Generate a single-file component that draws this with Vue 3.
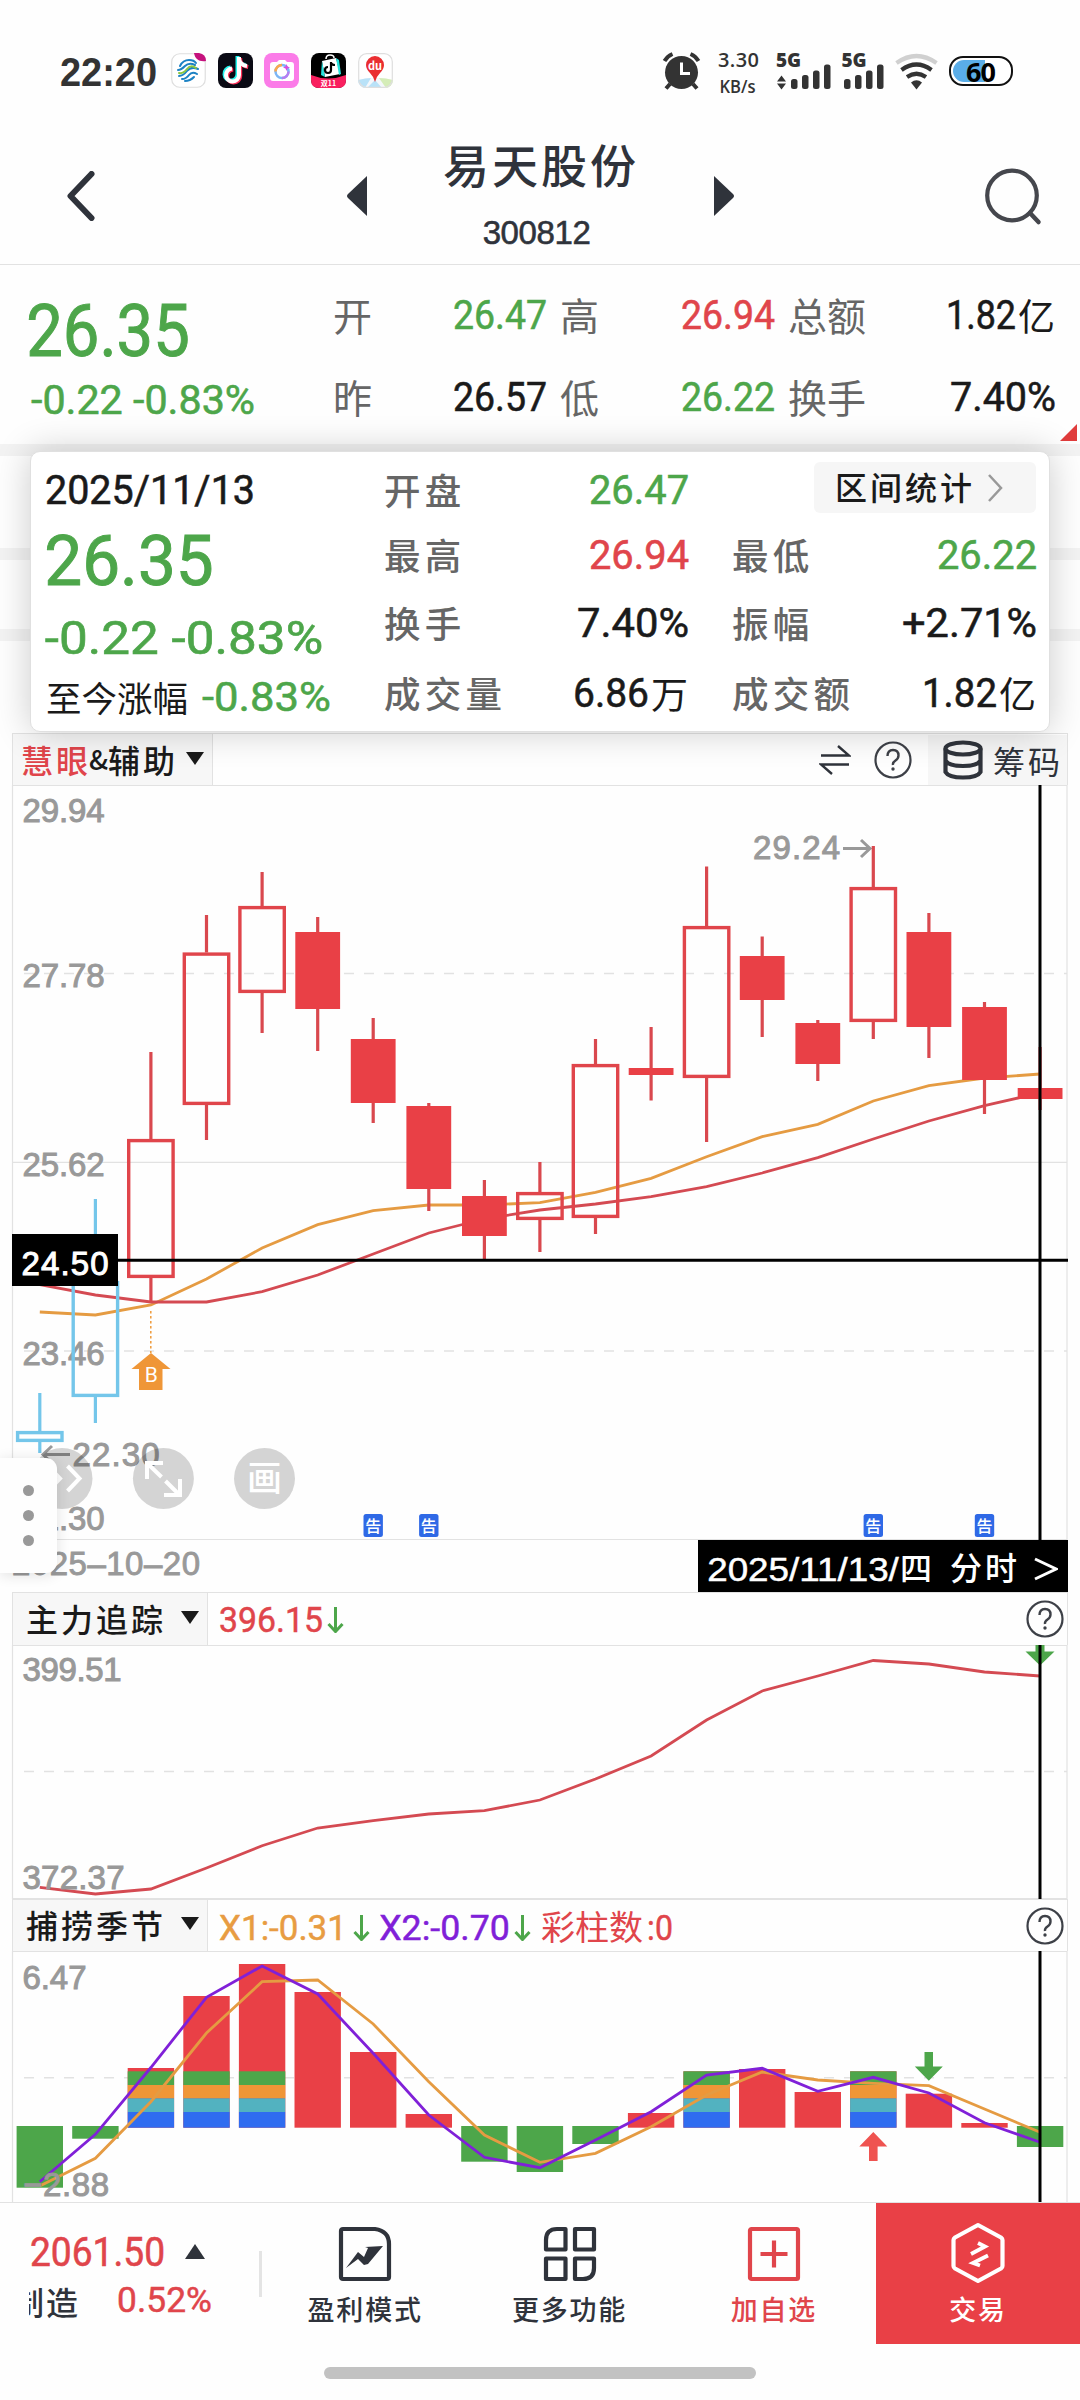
<template>
  <div class="page">
    <header class="status">
      <FitNum class="clock" t="22:20" :w="95" :s="40" bold />
      <svg class="apps" viewBox="0 0 222 36" width="222" height="36">
        <rect x=".75" y=".75" width="33.5" height="33.5" rx="8" fill="#fff" stroke="#dedede" stroke-width="1.2" />
        <path d="M23 0h5q7 1 7 8c-7 1-11-2-12-8z" fill="#c5127d" />
        <g fill="none" stroke-width="2" stroke-linecap="round">
          <path d="M9 13q3-6 9-6 5 0 7 3M7 17q3 0 7-4t10-1" stroke="#1c82c4" />
          <path d="M8 23q4 0 8-5t11-2M11 26q4 0 7-4t8-1M14 28q5 0 9-4" stroke="#1c82c4" />
          <path d="M8 20q4 1 8-4t9-1" stroke="#8cc63f" />
        </g>
        <rect x="47" width="35" height="35" rx="8" fill="#0a0a14" />
        <g fill="none" stroke-width="4">
          <path d="M68 4v18a6.500 6.500 0 1 1-7-6.500M68 6q1 6 8 7" stroke="#25f4ee" transform="translate(-1.500 -1)" />
          <path d="M68 4v18a6.500 6.500 0 1 1-7-6.500M68 6q1 6 8 7" stroke="#fe2c55" transform="translate(1.200 1)" />
          <path d="M68 4v18a6.500 6.500 0 1 1-7-6.500M68 6q1 6 8 7" stroke="#fff" />
        </g>
        <rect x="93" width="35" height="35" rx="8" fill="#fb7be8" />
        <path d="M102 9h4l2-2h6l2 2h4q3 0 3 3v13q0 3-3 3h-18q-3 0-3-3V12q0-3 3-3z" fill="#fff" />
        <circle cx="111" cy="18.500" r="6.500" fill="none" stroke="#7cb6f6" stroke-width="2.500" />
        <path d="M104.500 18.500a6.500 6.500 0 0 1 6.500-6.500" fill="none" stroke="#fba94c" stroke-width="2.500" />
        <path d="M111 25a6.500 6.500 0 0 0 6.500-6.500" fill="none" stroke="#b67df2" stroke-width="2.500" />
        <path d="M115.500 11l1 2.500 2.500 1-2.500 1-1 2.500-1-2.500-2.500-1 2.500-1z" fill="#d94be0" />
        <rect x="140" width="35" height="35" rx="8" fill="#000" />
        <path d="M140 22q17 7 35 0v5q0 8-8 8h-19q-8 0-8-8z" fill="#f9205f" />
        <path d="M151 8l14-3 4 16-15 3z" fill="#fff" />
        <path d="M151 8l3 16-4-2zM165 5l3 2 2 14-2 1z" fill="#25e4de" />
        <path d="M155 6q0-4 4-4t4 3" fill="none" stroke="#fff" stroke-width="1.500" />
        <path d="M160 9v8a3 3 0 1 1-3-3M160 10q1 2 4 2" fill="none" stroke="#000" stroke-width="2.200" />
        <text x="157.500" y="33" class="tiny">双11</text>
        <clipPath id="mapClip"><rect x="187" y="0" width="35" height="35" rx="8" /></clipPath>
        <g clip-path="url(#mapClip)">
          <rect x="187" width="35" height="35" fill="#fff" />
          <path d="M187 27q16-5 35 0v9h-35z" fill="#f4f7fb" />
          <path d="M187 27q8-2 13-2l-6 10h-7zM204 27l7 8h-15z" fill="#b9e2f8" />
          <path d="M208 25q7 0 14 2v8h-7z" fill="#d5edb8" />
        </g>
        <rect x="187.700" y=".7" width="33.600" height="33.600" rx="8" fill="none" stroke="#dedede" stroke-width="1.200" />
        <path d="M204 29q-1-5-5-9-4-4-4-8a9 9 0 0 1 18 0q0 4-4 8-4 4-5 9z" fill="#ea2e31" />
        <text x="204" y="17" class="tiny du">du</text>
      </svg>
      <svg class="sys" viewBox="660 48 356 48" width="356" height="48">
        <g fill="#333">
          <circle cx="681.500" cy="72.500" r="16.500" />
          <g fill="none" stroke="#333" stroke-width="4">
            <path d="M664.500 61q3-5 8-7M698.500 61q-3-5-8-7M670 84l-4 4.500M693 84l4 4.500" />
            <path d="M681.500 62.500v11h8.500" stroke="#fff" stroke-width="3" />
          </g>
          <text x="718" y="66.500" textLength="41" font-size="20" font-weight="600">3.30</text>
          <text x="719.500" y="92.500" textLength="36" lengthAdjust="spacingAndGlyphs" font-size="18" font-weight="600">KB/s</text>
          <g v-for="g in signals" :key="g.x">
            <text :x="g.tx" y="67" textLength="25" font-size="19" font-weight="800">5G</text>
            <rect v-for="(h, i) in [10, 14, 18.500, 24.500]" :key="i" :x="g.x + i * 11" :y="89 - h" width="6.500" :height="h" rx="2.500" />
          </g>
          <path d="M777 81.500l4.500-6 4.500 6zM777 83.500l4.500 6 4.500-6z" />
          <path d="M911 82.500q5.500-4.500 11 0l-5.500 7z" />
        </g>
        <g fill="none" stroke-width="4.200">
          <path d="M896.500 63q20-14 40 0" stroke="#d0d0d0" />
          <path d="M901.500 70q15-11 30 0M907 77q9.500-6.500 19 0" stroke="#333" />
        </g>
        <rect x="950" y="57" width="62" height="28" rx="13" fill="#fff" stroke="#111" stroke-width="2" />
        <path d="M985 60v22h-21a11 11 0 0 1 0-22z" fill="#5aade8" />
        <text x="966" y="81.500" textLength="30" font-size="27" font-weight="700" fill="#000">60</text>
      </svg>
    </header>

    <nav class="nav">
      <svg class="back" viewBox="0 0 28 50" width="28" height="50">
        <path d="M24.500 3L3.500 25l21 22" fill="none" stroke="#2f333b" stroke-width="6" stroke-linecap="round" stroke-linejoin="round" />
      </svg>
      <svg class="prev" viewBox="0 0 20 40" width="20" height="40"><path d="M20 0v40L1 22q-2-2 0-4z" fill="#2f333b" /></svg>
      <div class="name">
        <h1>易天股份</h1>
        <p>300812</p>
      </div>
      <svg class="next" viewBox="0 0 20 40" width="20" height="40"><path d="M0 0v40l19-18q2-2 0-4z" fill="#2f333b" /></svg>
      <svg class="search" viewBox="0 0 58 58" width="58" height="58">
        <circle cx="27" cy="27.500" r="24.800" fill="none" stroke="#45474d" stroke-width="4.200" />
        <path d="M45 45l8.500 9" stroke="#45474d" stroke-width="4.500" stroke-linecap="round" />
      </svg>
    </nav>

    <section class="quote">
      <div class="last green">
        <FitNum t="26.35" :w="160" :s="71.500" />
        <FitNum class="chg" t="-0.22 -0.83%" :w="222" :s="41" />
      </div>
      <div v-for="(col, i) in summary" :key="i" class="col">
        <div v-for="s in col" :key="s.label" class="stat">
          <span>{{ s.label }}</span>
          <b :class="s.color"><FitNum :t="s.value" :w="s.w" :s="41" /><i v-if="s.unit">{{ s.unit }}</i></b>
        </div>
      </div>
      <i class="corner"></i>
    </section>
    <div class="strips"><i></i><i></i><i></i></div>

    <section class="tip">
      <div class="tip-left">
        <FitNum t="2025/11/13" :w="208" :s="41" />
        <FitNum class="green t-price" t="26.35" :w="166" :s="70" />
        <FitNum class="green t-chg" t="-0.22 -0.83%" :w="276" :s="46" />
        <p class="since">至今涨幅<FitNum class="green" t="-0.83%" :w="127" :s="41" /></p>
      </div>
      <div v-for="(col, i) in detail" :key="i" class="tip-col">
        <button v-if="i === 1" class="range">
          区间统计
          <svg viewBox="0 0 16 28" width="16" height="28"><path d="M2 1l12 13L2 27" fill="none" stroke="#999" stroke-width="2.500" /></svg>
        </button>
        <div v-for="s in col" :key="s.label" class="stat">
          <span>{{ s.label }}</span>
          <b :class="s.color"><FitNum :t="s.value" :w="s.w" :s="41" /><i v-if="s.unit">{{ s.unit }}</i></b>
        </div>
      </div>
    </section>

    <main class="charts">
      <div class="bar first">
        <div class="tab main-tab"><em>慧眼</em><u>&amp;</u>辅助<i class="down"></i></div>
        <svg class="swap" viewBox="0 0 32 30" width="32" height="30">
          <path d="M2 10.500h28L19 1M30 19.500H2l11 9.500" fill="none" stroke="#2f333b" stroke-width="2.400" />
        </svg>
        <HelpIcon />
        <div class="chips">
          <svg viewBox="0 0 40 40" width="40" height="40">
            <g fill="none" stroke="#2f333b" stroke-width="4.200">
              <ellipse cx="20" cy="8.500" rx="17.500" ry="6" />
              <path d="M2.500 8.500v23.500q3 5.500 17.500 5.500t17.500-5.500V8.500M2.500 20.500q3 5.500 17.500 5.500t17.500-5.500" />
            </g>
          </svg>
          筹码
        </div>
      </div>

      <svg class="plot" viewBox="0 785 1080 755" width="1080" height="755">
        <g class="frame">
          <path d="M12.500 785V1539.500H1067V785M12.500 785.500H1067" />
          <path d="M12.500 1162.300H1067" />
          <path class="dash" d="M24 973.500H1067M24 1351H1067" />
        </g>
        <g class="axis">
          <text x="22.500" y="822" textLength="82">29.94</text>
          <text x="22.500" y="987" textLength="82">27.78</text>
          <text x="22.500" y="1176" textLength="82">25.62</text>
          <text x="22.500" y="1365" textLength="82">23.46</text>
          <text x="22.500" y="1530" textLength="82">21.30</text>
          <text x="753" y="859" textLength="87">29.24</text>
          <path d="M843 848.500h26M861 840l9 8.500-9 8.500" />
          <text x="72.500" y="1466" textLength="87">22.30</text>
          <path d="M70 1454.500H45M52 1446l-9 8.500 9 8.500" />
        </g>
        <polyline :points="line(maFast)" class="ln orange" />
        <polyline :points="line(maSlow)" class="ln red" />
        <g v-for="(c, i) in candles" :key="i" :class="['candle', c[4]]">
          <path :d="`M${cx(i)} ${c[0]}V${c[1]}M${cx(i)} ${c[2]}V${c[3]}`" />
          <rect v-if="c[4] === 'fall'" :x="cx(i) - 22.400" :y="c[1]" width="44.800" :height="c[2] - c[1]" />
          <rect v-else :x="cx(i) - 22.200" :y="c[1] + 1.600" width="44.400" :height="c[2] - c[1] - 3.200" />
        </g>
        <path d="M150.800 1311V1353" stroke="#ef9a3a" stroke-width="1.500" stroke-dasharray="2.500 2.500" />
        <path d="M151 1353l19.500 16h-8v21h-23.500v-21h-7.500z" fill="#ef9637" />
        <text x="151.300" y="1382" class="mark">B</text>
        <g v-for="i in [6, 7, 15, 17]" :key="i">
          <rect :x="cx(i) - 9.700" y="1514" width="19.400" height="23" rx="2.500" fill="#2f69e6" />
          <text :x="cx(i)" y="1531.500" class="notice">告</text>
        </g>
        <path d="M118 1260.300H1068M1040 785V1540" stroke="#000" stroke-width="3" />
        <rect x="12" y="1234" width="106" height="52" fill="#000" />
        <text x="21.500" y="1274.500" textLength="87" class="cross">24.50</text>
        <g fill="#000" fill-opacity=".165">
          <circle v-for="x in [62, 163.400, 264.500]" :key="x" :cx="x" cy="1478.500" r="30.500" />
        </g>
        <g class="tool">
          <path d="M48 1466l12 12.500-12 12.500M67.500 1466l12 12.500-12 12.500" />
          <path d="M163 1463h-16v16M148 1464l13.500 13M164 1495h16v-16M165.500 1481l13 13" />
        </g>
        <text x="264.500" y="1491" class="draw">画</text>
      </svg>

      <div class="dates">
        <span>2025–10–20</span>
        <div class="cur"><FitNum t="2025/11/13/" :w="190" :s="33.500" sans /><b>四</b><b class="fs">分时</b>
          <svg viewBox="0 0 24 24" width="24" height="24"><path d="M1 2l21 10L1 22" fill="none" stroke="#fff" stroke-width="3" /></svg>
        </div>
      </div>

      <div class="bar force">
        <div class="tab">主力追踪<i class="down"></i></div>
        <div class="vals red"><FitNum t="396.15" :w="102" :s="35.500" /><DownArrow /></div>
        <HelpIcon />
      </div>
      <svg class="plot" viewBox="0 1645 1080 254" width="1080" height="254">
        <g class="frame">
          <path d="M12.500 1645V1898.500H1067V1645M12.500 1645.500H1067" />
          <path class="dash" d="M24 1771.500H1067" />
        </g>
        <polyline :points="line(force)" class="ln red" />
        <g class="axis">
          <text x="22.500" y="1681" textLength="99">399.51</text>
          <text x="22.500" y="1889" textLength="102">372.37</text>
        </g>
        <path d="M1035.500 1645h9v6.500h10l-14.500 14-14.500-14h10z" fill="#4da64a" />
        <path d="M1040 1645V1899" stroke="#000" stroke-width="3" />
      </svg>

      <div class="bar">
        <div class="tab">捕捞季节<i class="down"></i></div>
        <div class="vals low">
          <FitNum class="orange" t="X1:-0.31" :w="126" :s="35.500" /><DownArrow class="gap" />
          <FitNum class="purple" t="X2:-0.70" :w="129" :s="35.500" /><DownArrow />
          <span class="red">彩柱数</span><FitNum class="red" t=":0" :w="24" :s="35.500" />
        </div>
        <HelpIcon />
      </div>
      <svg class="plot" viewBox="0 1951 1080 251" width="1080" height="251">
        <g class="frame">
          <path d="M12.500 1951V2202M1067 1951V2202M12.500 1951.500H1067" />
          <path class="dash" d="M24 2077.700H1067" />
        </g>
        <g v-for="(b, i) in bars" :key="i">
          <rect v-if="b > 0" :x="cx(i) - 23.200" y="2126" width="46.400" :height="b" fill="#4da64a" />
          <rect v-else :x="cx(i) - 23.200" :y="2127.700 + b" width="46.400" :height="-b" fill="#e94046" />
        </g>
        <g v-for="i in [2, 3, 4, 12, 15]" :key="'s' + i">
          <rect v-for="l in layers" :key="l.y" :x="cx(i) - 23.200" :y="l.y" width="46.400" :height="l.h" :fill="l.c" />
        </g>
        <polyline :points="line(x1)" class="ln orange" />
        <polyline :points="line(x2)" class="ln purple" />
        <path d="M924.500 2052h8.500v14.500h9.800l-14 14.300-14-14.300h9.700z" fill="#4da64a" />
        <path d="M873.300 2132l14 14.500h-9.700v14.500h-8.600v-14.500h-9.700z" fill="#ef5350" />
        <g class="axis">
          <text x="22.500" y="1988.500" textLength="64">6.47</text>
          <text x="23" y="2195.500" textLength="86">−2.88</text>
        </g>
        <path d="M1040 1951V2202" stroke="#000" stroke-width="3" />
      </svg>

      <div class="handle"><i></i><i></i><i></i></div>
    </main>

    <footer class="foot">
      <div class="index">
        <div class="row red"><FitNum t="2061.50" :w="133" :s="41" /><i class="up"></i></div>
        <div class="row"><div class="clip"><span>制造</span></div><FitNum class="red" t="0.52%" :w="93" :s="35.500" /></div>
      </div>
      <div class="item">
        <svg viewBox="0 0 54 62" width="54" height="62">
          <path d="M3 9q0-2 2-2h32q14 2 14 15v33q0 2-2 2H5q-2 0-2-2z" fill="none" stroke="#2f333b" stroke-width="4.200" />
          <path d="M8 46l12-16 6 5 4-9-3-1 18-1-15 18-4 1-6-6z" fill="#2f333b" />
        </svg>
        盈利模式
      </div>
      <div class="item">
        <svg viewBox="0 0 54 62" width="54" height="62">
          <g fill="none" stroke="#2f333b" stroke-width="4.200" stroke-linejoin="round">
            <path d="M3 18q0-11 11-11h8.500v20.500H3zM32 7h19v20.500H32zM3 36.500h19.500V57H3zM32 36.500h19V46q0 11-11 11h-8z" />
          </g>
        </svg>
        更多功能
      </div>
      <div class="item red">
        <svg viewBox="0 0 54 62" width="54" height="62">
          <rect x="3" y="7" width="48" height="50" rx="1.500" fill="none" stroke="#e0454b" stroke-width="4.200" />
          <path d="M27 18.500v27M13.500 32h27" stroke="#e0454b" stroke-width="4.200" />
        </svg>
        加自选
      </div>
      <div class="item trade">
        <svg viewBox="0 0 54 62" width="54" height="62">
          <path d="M27 3l23 12.500q1.500 1 1.500 2.500v26q0 1.500-1.500 2.500L27 59 4 46.500Q2.500 45.500 2.500 44V18q0-1.500 1.500-2.500z" fill="none" stroke="#fff" stroke-width="4.200" stroke-linejoin="round" />
          <path d="M20 32l14-7.500-7-3.500M37 33.500L22 41l7 2.500" fill="none" stroke="#fff" stroke-width="3.800" />
        </svg>
        交易
      </div>
    </footer>
    <div class="home"></div>
  </div>
</template>

<script setup>
import { h } from 'vue'

// condensed number, the svg box is exactly as wide as the digits and as high as their caps
const FitNum = (p) => {
  const din = p.sans === undefined && p.bold === undefined
  const cap = p.s * 0.711
  const pad = p.s * 0.025
  return h('svg', { width: p.w, height: cap, overflow: 'visible', fill: 'currentColor' }, [
    h('text', {
      x: -pad,
      y: cap,
      'font-size': p.s,
      'font-family': din ? 'Roboto, sans-serif' : '"Liberation Sans", sans-serif',
      'font-weight': p.bold !== undefined ? 700 : 400,
      stroke: 'currentColor',
      'stroke-width': p.bold !== undefined ? 0 : p.s * 0.014,
      textLength: p.w + pad * 2,
      lengthAdjust: 'spacingAndGlyphs',
    }, p.t),
  ])
}

const HelpIcon = () => h('svg', { class: 'help', width: 38, height: 38, viewBox: '0 0 38 38', fill: 'none', stroke: '#3d4047' }, [
  h('circle', { cx: 19, cy: 19, r: 17.5, 'stroke-width': 2.2 }),
  h('path', { d: 'M13.5 15q0-6 5.500-6t5.500 5.500q0 3-3 5t-2.500 4.500', 'stroke-width': 2.4 }),
  h('circle', { cx: 19, cy: 28, r: 1.7, fill: '#3d4047', stroke: 'none' }),
])

const DownArrow = () => h('svg', { width: 17, height: 26, viewBox: '0 0 17 26', fill: 'none', stroke: '#4da64a', 'stroke-width': 3 }, [
  h('path', { d: 'M8.500 0v24M1.500 17l7 7.500 7-7.500' }),
])

const signals = [{ tx: 776, x: 791 }, { tx: 841.5, x: 844 }]

const summary = [
  [
    { label: '开', value: '26.47', w: 92, color: 'green' },
    { label: '昨', value: '26.57', w: 92 },
  ],
  [
    { label: '高', value: '26.94', w: 92, color: 'red' },
    { label: '低', value: '26.22', w: 92, color: 'green' },
  ],
  [
    { label: '总额', value: '1.82', w: 68, unit: '亿' },
    { label: '换手', value: '7.40%', w: 104 },
  ],
]

const detail = [
  [
    { label: '开盘', value: '26.47', w: 98, color: 'green' },
    { label: '最高', value: '26.94', w: 98, color: 'red' },
    { label: '换手', value: '7.40%', w: 110 },
    { label: '成交量', value: '6.86', w: 74, unit: '万' },
  ],
  [
    { label: '最低', value: '26.22', w: 98, color: 'green' },
    { label: '振幅', value: '+2.71%', w: 133 },
    { label: '成交额', value: '1.82', w: 73, unit: '亿' },
  ],
]

// high, top, bottom, low, type
const candles = [
  [1393, 1431, 1442, 1453, 'flat'],
  [1199, 1281, 1397, 1423, 'flat'],
  [1052, 1139, 1278, 1302, 'rise'],
  [915, 952.5, 1105, 1140, 'rise'],
  [872, 906, 993, 1033, 'rise'],
  [917, 932, 1009, 1051, 'fall'],
  [1018, 1039, 1103, 1123, 'fall'],
  [1103, 1106, 1189, 1211, 'fall'],
  [1180, 1196, 1236, 1259, 'fall'],
  [1162, 1192, 1220, 1252, 'rise'],
  [1039, 1064, 1218, 1234, 'rise'],
  [1027, 1068, 1075, 1100.5, 'fall'],
  [866.5, 926, 1078, 1142, 'rise'],
  [936.5, 956, 1000, 1037, 'fall'],
  [1020, 1023, 1064, 1081, 'fall'],
  [846, 887, 1022, 1039, 'rise'],
  [913, 932, 1027, 1058, 'fall'],
  [1002, 1007, 1080, 1114, 'fall'],
  [1047, 1088, 1099, 1110, 'fall'],
]
const maFast = [1312, 1315, 1305, 1279, 1248, 1224.7, 1210.7, 1205, 1205, 1202.7, 1192.3, 1178.3, 1156.7, 1136.7, 1124.3, 1101, 1085.7, 1078, 1074]
const maSlow = [1284.7, 1295, 1302, 1302, 1291.7, 1275, 1254, 1233, 1219, 1210, 1204, 1196.7, 1186.7, 1173, 1157.7, 1139, 1121, 1105.7, 1093]
const force = [1887.3, 1894, 1889, 1868, 1845.7, 1828, 1820.7, 1814, 1810.7, 1800, 1779, 1756, 1720, 1691, 1676, 1660.5, 1664, 1672, 1676]
const x1 = [2186, 2158.3, 2101.7, 2033, 1981.7, 1980, 2024, 2081.7, 2135, 2162.3, 2153.3, 2126.7, 2095, 2072, 2080, 2083.3, 2085.7, 2109, 2132.3]
const x2 = [2181.7, 2134.3, 2067.5, 1997.3, 1966, 1994, 2053.3, 2115, 2157.3, 2167.7, 2140, 2111.7, 2075, 2068.3, 2091.3, 2077.3, 2093, 2122.7, 2142.3]
// above zero negative, below zero positive
const bars = [61.7, 12.7, -59.7, -131.7, -163.7, -135.7, -75.7, -13.7, 35.7, 46, 18, -14.7, -56.4, -58.7, -35.7, -56.4, -34, -4.7, 21]
const layers = [
  { y: 2071.3, h: 13.7, c: '#4da64a' },
  { y: 2085, h: 13.3, c: '#ef9637' },
  { y: 2098.3, h: 13.7, c: '#52b2c0' },
  { y: 2112, h: 15.7, c: '#2f6cf0' },
]

const cx = (i) => +(39.8 + i * 55.57).toFixed(1)
const line = (ys) => ys.map((y, i) => `${cx(i)},${y}`).join(' ')
</script>

<style>
body {
  background: #fefefe;
}
</style>

<style scoped>
.page {
  position: relative;
  width: 1080px;
  height: 2400px;
  overflow: hidden;
  background: #fefefe;
  color: #1a1a1a;
  font-family: "Noto Sans CJK SC", sans-serif;
}

i, em, u {
  font-style: normal;
  text-decoration: none;
}

b {
  font-weight: 400;
}

svg {
  flex: none;
  display: block;
}

.green { color: #4da64a; }
.red { color: #e0454b; }
.orange { color: #e89c42; }
.purple { color: #8020d8; }

.status {
  display: flex;
  height: 96px;
  box-sizing: border-box;
  padding-left: 61px;
}

.clock {
  margin-top: 58px;
  color: #333;
}

.apps {
  margin: 53px 0 0 15px;
}

.sys {
  margin: 48px 0 0 267px;
  overflow: visible;
  font-family: "Open Sans", sans-serif;
}

.tiny {
  font: 700 7px "Noto Sans CJK SC", sans-serif;
  fill: #fff;
  text-anchor: middle;
}

.tiny.du {
  font-size: 11px;
}

.nav {
  display: flex;
  align-items: flex-start;
  height: 169px;
  box-sizing: border-box;
  border-bottom: 1px solid #e2e2e2;
}

.back { margin: 75px 0 0 67px; }
.prev { margin: 80px 0 0 252px; }
.next { margin: 80px 0 0 39px; }
.search { margin: 72px 0 0 251px; }

.name {
  width: 308px;
  text-align: center;
  color: #2f333b;
}

.name h1 {
  margin: 42px 0 0;
  padding-left: 40px;
  font-size: 46px;
  line-height: 50px;
  font-weight: 500;
  letter-spacing: 3px;
  white-space: nowrap;
}

.name p {
  margin: 26px 0 0;
  padding-left: 31px;
  font: 33px/38px "Liberation Sans", sans-serif;
  letter-spacing: -0.4px;
  -webkit-text-stroke: 0.6px #2f333b;
}

.quote {
  position: relative;
  display: grid;
  grid-template-columns: 291px 213px 214px 267px;
  column-gap: 14px;
  height: 179px;
  box-sizing: border-box;
  padding-left: 28px;
}

.last {
  padding-top: 40px;
}

.chg {
  margin: 29px 0 0 4px;
}

.col {
  display: grid;
  grid-template-rows: 82px 40px;
  padding-top: 30px;
}

.stat {
  display: flex;
  justify-content: space-between;
  align-items: center;
  height: 40px;
  color: #1a1a1a;
}

.stat span {
  font-size: 39px;
  line-height: 40px;
  font-weight: 400;
  color: #666;
}

.col .stat span {
  margin-top: -2px;
}

.stat b {
  display: flex;
  align-items: center;
}

.stat b i {
  margin-left: 3px;
  font-size: 37px;
  line-height: 40px;
}

.stat .green { color: #4da64a; }
.stat .red { color: #e0454b; }

.corner {
  position: absolute;
  right: 3px;
  bottom: 3px;
  border: solid transparent;
  border-width: 17px 0 0 17px;
  border-bottom: 17px solid #e03c3c;
  border-top: 0;
}

.strips i {
  display: block;
  height: 12px;
  background: #f3f3f3;
  margin-bottom: 92px;
}

.strips i:nth-child(2) {
  margin-bottom: 69px;
}

.tip {
  position: absolute;
  left: 30px;
  top: 451px;
  z-index: 2;
  display: grid;
  grid-template-columns: 339px 304px 348px;
  width: 1020px;
  height: 281px;
  box-sizing: border-box;
  padding: 0 0 0 14px;
  border: 1.500px solid #e0e0e0;
  border-radius: 10px;
  background: #fff;
  box-shadow: 0 0 36px rgba(0, 0, 0, 0.2);
}

.tip-left {
  padding: 23px 0 0 1px;
}

.t-price { margin-top: 31px; }
.t-chg { margin-top: 36px; }

.since {
  display: flex;
  align-items: center;
  justify-content: space-between;
  width: 284px;
  height: 33px;
  margin: 26px 0 0;
  font-size: 35.500px;
  line-height: 33px;
  white-space: nowrap;
}

.tip-col {
  display: grid;
  grid-template-rows: 65px 68px 70px 40px;
  padding-top: 18px;
}

.tip-col + .tip-col {
  padding-left: 44px;
}

.tip-col .stat span {
  font-size: 36.500px;
  font-weight: 500;
  letter-spacing: 4.300px;
}

.range {
  justify-self: end;
  display: flex;
  align-items: center;
  justify-content: space-between;
  width: 222px;
  height: 51px;
  margin: -8px 0 0;
  padding: 0 33px 3px 21px;
  border: 0;
  border-radius: 6px;
  background: #f6f6f6;
  color: #1a1a1a;
  font: 500 32px/48px "Noto Sans CJK SC", sans-serif;
  letter-spacing: 3px;
  white-space: nowrap;
}

.range svg {
  margin-top: 3px;
}

.bar {
  display: flex;
  align-items: center;
  height: 52px;
  margin: 0 12px;
  padding-right: 3px;
  border: 1px solid #e2e2e2;
  border-width: 1px 1px 0;
  box-sizing: border-box;
}

.force {
  height: 53px;
}

.tab {
  display: flex;
  align-items: center;
  width: 195px;
  height: 100%;
  box-sizing: border-box;
  padding: 0 8px 3px 13px;
  border-right: 1px solid #e2e2e2;
  background: #f7f7f7;
  font-size: 32px;
  line-height: 48px;
  font-weight: 500;
  letter-spacing: 3px;
  white-space: nowrap;
}

.first .tab {
  width: 200px;
  padding: 0 8px 1px;
}

.tab em { color: #e0454b; }
.tab u { font-size: 27px; letter-spacing: 0; margin-left: -2px; }

.down {
  margin: -1px 0 0 auto;
  border: 9px solid transparent;
  border-top: 13px solid #1a1a1a;
  border-bottom: 0;
}

.help {
  margin-left: auto;
}

.swap {
  margin-left: 606px;
}

.first {
  padding: 0;
}

.first .help {
  margin-left: 23px;
}

.chips {
  display: flex;
  align-items: center;
  gap: 10px;
  width: 139px;
  height: 50px;
  margin-left: auto;
  padding-left: 15px;
  box-sizing: border-box;
  background: #f6f6f6;
  color: #2f333b;
  font-size: 32px;
  line-height: 48px;
  letter-spacing: 3px;
  white-space: nowrap;
}

.vals {
  display: flex;
  align-items: center;
  padding: 2px 0 0 12px;
  gap: 5px;
}

.vals.low {
  padding-top: 5px;
}

.vals .gap { margin: 0 5px 0 2px; }

.vals span {
  margin: -4px 0 0 5px;
  font-size: 34px;
  line-height: 40px;
}

.frame path {
  fill: none;
  stroke: #e2e2e2;
  stroke-width: 1.200;
}

.frame .dash {
  stroke-width: 1.500;
  stroke-dasharray: 10 10;
}

.axis text, .cross {
  font: 33px "Liberation Sans", sans-serif;
  fill: #999;
  stroke: #999;
  stroke-width: 1;
}

.axis path {
  fill: none;
  stroke: #999;
  stroke-width: 3;
}

.cross {
  fill: #fff;
  stroke: #fff;
}

.ln {
  fill: none;
  stroke-width: 2.800;
}

.ln.orange { stroke: #e59b42; }
.ln.red { stroke: #d44a52; }
.ln.purple { stroke: #8020d8; }

.candle path {
  stroke: #d9484e;
  stroke-width: 3.200;
}

.candle rect {
  fill: none;
  stroke: #e0454b;
  stroke-width: 3.400;
}

.fall rect {
  fill: #e94046;
  stroke: none;
}

.flat path, .flat rect {
  stroke: #74c6ea;
}

.mark {
  font: 21px Roboto, sans-serif;
  fill: #fff;
  text-anchor: middle;
}

.notice {
  font: 500 16px "Noto Sans CJK SC", sans-serif;
  fill: #fff;
  text-anchor: middle;
}

.tool path {
  fill: none;
  stroke: #fff;
  stroke-width: 4;
}

.draw {
  font: 500 35px "Noto Sans CJK SC", sans-serif;
  fill: #fff;
  text-anchor: middle;
}

.dates {
  display: flex;
  justify-content: space-between;
  height: 52px;
  padding: 0 12px;
}

.dates > span {
  font: 33px/48px "Liberation Sans", sans-serif;
  letter-spacing: 0.500px;
  color: #999;
  -webkit-text-stroke: 0.900px #999;
}

.cur {
  display: flex;
  align-items: center;
  width: 370px;
  box-sizing: border-box;
  padding: 6px 0 0 10px;
  background: #000;
  color: #fff;
}

.cur b {
  margin-left: 2px;
  font-size: 32px;
  line-height: 44px;
  margin-top: -6px;
  font-weight: 500;
}

.cur .fs {
  margin-left: 18px;
  letter-spacing: 3px;
}

.cur svg:last-child {
  margin-left: 14px;
}

.handle {
  position: absolute;
  left: 0;
  top: 1458px;
  display: flex;
  flex-direction: column;
  align-items: center;
  justify-content: center;
  gap: 14px;
  width: 57px;
  height: 115px;
  border-radius: 0 11px 11px 0;
  background: #fefefe;
  box-shadow: 0 2px 14px rgba(0, 0, 0, 0.12);
}

.handle i {
  width: 11px;
  height: 11px;
  border-radius: 50%;
  background: #999;
}

.foot {
  display: flex;
  height: 142px;
  box-sizing: border-box;
  border-top: 1px solid #e2e2e2;
}

.index {
  position: relative;
  width: 263px;
  box-sizing: border-box;
  padding: 34px 0 0 29px;
}

.index::after {
  content: "";
  position: absolute;
  right: 1px;
  top: 48px;
  width: 3px;
  height: 46px;
  background: #e4e4e4;
}

.row {
  display: flex;
  align-items: center;
  height: 29px;
  padding-left: 2px;
}

.up {
  margin-left: 21px;
  border: 10px solid transparent;
  border-bottom: 15px solid #2f333b;
  border-top: 0;
}

.row + .row {
  height: 32px;
  margin-top: 20px;
  padding: 0;
}

.clip {
  display: flex;
  justify-content: flex-end;
  width: 51px;
  height: 40px;
  margin-right: 38px;
  overflow: hidden;
  color: #2f333b;
  font-size: 32px;
  line-height: 38px;
  letter-spacing: 2px;
  font-weight: 500;
  white-space: nowrap;
}

.row + .row svg {
  margin-top: -5px;
}

.item {
  display: flex;
  flex-direction: column;
  align-items: center;
  width: 204.400px;
  padding-top: 19px;
  color: #2f333b;
  font-size: 27px;
  line-height: 36px;
  letter-spacing: 1.800px;
  font-weight: 500;
}

.item svg {
  margin-bottom: 7px;
}

.item.red { color: #e0454b; }

.trade {
  width: 204px;
  background: #e94046;
  color: #fff;
}

.home {
  width: 432px;
  height: 12px;
  margin: 23px auto 0;
  border-radius: 6px;
  background: #c2c2c2;
}
</style>
